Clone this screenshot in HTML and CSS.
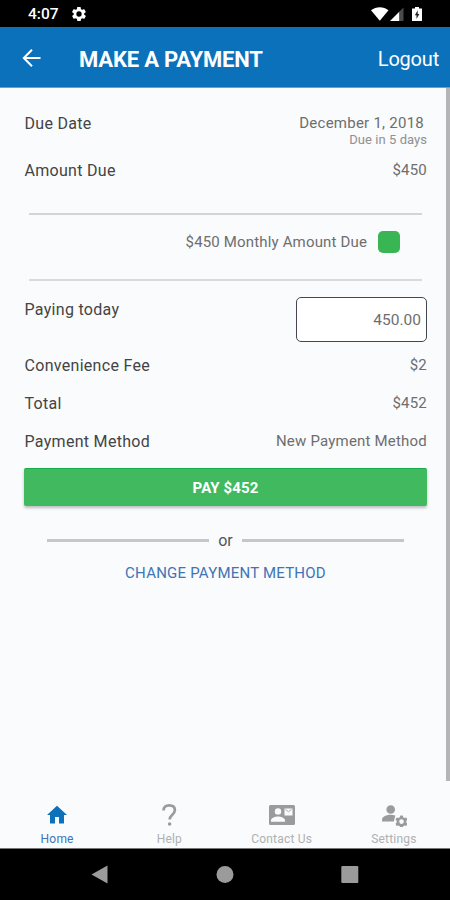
FILE: index.html
```html
<!DOCTYPE html>
<html lang="en">
<head>
<meta charset="utf-8">
<title>Make a Payment</title>
<link rel="stylesheet" href="styles.css">
</head>
<body>
<div class="status">
  <span class="clock">4:07</span>
  <svg class="gear" viewBox="2 2 20 20"><path fill="#fff" d="M19.4 13a7.500 7.500 0 0 0 0-2l2.100-1.600c.2-.2.3-.4.1-.7l-2-3.400c-.1-.2-.4-.3-.6-.2l-2.500 1a7 7 0 0 0-1.700-1l-.4-2.600a.5.5 0 0 0-.5-.5h-4c-.3 0-.5.2-.5.5l-.4 2.600a7 7 0 0 0-1.700 1l-2.500-1c-.2-.1-.5 0-.6.2l-2 3.400c-.1.3-.1.5.1.7L4.500 11a7.500 7.500 0 0 0 0 2l-2.100 1.600c-.2.2-.2.4-.1.7l2 3.400c.1.2.4.3.6.2l2.500-1a7 7 0 0 0 1.700 1l.4 2.600c0 .3.2.5.5.5h4c.3 0 .5-.2.5-.5l.4-2.600a7 7 0 0 0 1.700-1l2.500 1c.2.1.5 0 .6-.2l2-3.400c.1-.3.1-.5-.1-.7zM12 15.800a3.800 3.800 0 1 1 0-7.600 3.800 3.800 0 0 1 0 7.600z"/></svg>
  <svg class="radios" viewBox="0 0 54 16">
    <path fill="#fff" d="M1 4.300C6.300.2 13.400.2 18.500 4.300L9.800 14.800z"/>
    <path fill="#fff" d="M20 15 29.500 5.500V15z"/><path fill="#4a4a4a" d="M29.500 5.500 33.500 1.500V15h-4z"/>
    <path fill="#fff" d="M42 2.500H45V1h4v1.500h3V15H42z"/><path fill="#222" d="M47.800 4.300 44.800 9.300h1.700v3.600l2.900-5h-1.700z"/>
  </svg>
</div>
<header class="bar">
  <svg class="back" viewBox="0 0 20 20"><path d="M18.500 10H2M10 1.800 1.800 10l8.200 8.200" fill="none" stroke="#fff" stroke-width="2"/></svg>
  <h1>MAKE A PAYMENT</h1>
  <span class="logout">Logout</span>
</header>
<main>
  <div class="content">
    <div class="row due"><span class="label">Due Date</span>
      <div class="stack"><span class="value date">December 1, 2018</span><span class="sub">Due in 5 days</span></div></div>
    <div class="row amount"><span class="label">Amount Due</span><span class="value">$450</span></div>
    <div class="option"><span class="value option-text">$450 Monthly Amount Due</span><span class="check"></span></div>
    <div class="row paying"><span class="label">Paying today</span><div class="field">450.00</div></div>
    <div class="row"><span class="label">Convenience Fee</span><span class="value">$2</span></div>
    <div class="row"><span class="label">Total</span><span class="value">$452</span></div>
    <div class="row method"><span class="label">Payment Method</span><span class="value">New Payment Method</span></div>
    <div class="pay">PAY $452</div>
    <div class="or"><span class="dash"></span><span>or</span><span class="dash"></span></div>
    <div class="change">CHANGE PAYMENT METHOD</div>
  </div>
  <div class="scroll"></div>
</main>
<nav class="tabs">
  <div class="tab active"><svg viewBox="0 0 24 24"><path d="M10 20.500v-6.500h4v6.500h5V12h3L12 2.800 2 12h3v8.500z"/></svg><span>Home</span></div>
  <div class="tab help"><svg viewBox="0 0 24 24"><path d="M6.600 7.600C6.600 4 8.900 2.300 12.200 2.300c3.500 0 5.700 1.800 5.700 4.800 0 2.200-1.200 3.500-2.800 4.900-1.600 1.500-2.400 2.300-2.400 4.500" fill="none" stroke="#9b9b9b" stroke-width="2.700"/><circle cx="12.600" cy="21" r="1.800"/></svg><span>Help</span></div>
  <div class="tab contact"><svg viewBox="0 0 26 20"><path fill-rule="evenodd" d="M1.500 0h23Q26 0 26 1.500v17q0 1.500-1.500 1.500h-23Q0 20 0 18.500v-17Q0 0 1.500 0zM9 3.200a3.200 3.200 0 1 0 0 6.400 3.200 3.200 0 0 0 0-6.400zM2 16.700h14v-1.200c0-2.600-4.500-4-7-4s-7 1.400-7 4zM15.500 3.500v7h8v-7z"/><path d="M16.500 4.500 19.500 6.700 22.500 4.500" fill="none" stroke="#aaa" stroke-width="1"/></svg><span>Contact Us</span></div>
  <div class="tab settings"><svg viewBox="0 0 26 24"><circle cx="9.700" cy="6.500" r="4.300"/><path d="M1 18.500v-2c0-3 5-4.700 8.700-4.700 1.700 0 3.300.3 4.600.8L12.800 18.500z"/><path fill-rule="evenodd" d="m19.300 12.500h2.400l.5 1.700 1.400.8 1.700-.5 1.200 2.100-1.200 1.300v1.600l1.200 1.300-1.200 2.100-1.700-.5-1.400.8-.5 1.700h-2.400l-.5-1.700-1.400-.8-1.700.5-1.200-2.100 1.200-1.300v-1.600l-1.200-1.300 1.200-2.100 1.700.5 1.400-.8zM20.500 16.300a2.300 2.300 0 1 0 0 4.600 2.300 2.300 0 0 0 0-4.600z"/></svg><span>Settings</span></div>
</nav>
<div class="android">
  <svg viewBox="0 0 450 52"><g fill="#9b9b9b"><path d="M91.500 25.500 107.500 16.500v18z"/><circle cx="225" cy="25.500" r="8.500"/><rect x="341.300" y="17" width="17" height="17" rx="1"/></g></svg>
</div>
</body>
</html>
```
FILE: styles.css
```css
* { box-sizing: border-box; }
body {
  margin: 0;
  height: 900px;
  display: flex;
  flex-direction: column;
  overflow: hidden;
  background: #f9fbfd;
  font-family: Roboto, sans-serif;
  font-size: 16px;
}
svg { display: block; }
.status {
  height: 27px;
  display: flex;
  align-items: center;
  background: #000;
  color: #fff;
  padding: 1px 26px 0 28px;
}
.clock { font-size: 15.500px; font-weight: 500; width: 44px; }
.gear { width: 14px; height: 14px; }
.radios { width: 54px; height: 16px; margin-left: auto; }
.bar {
  height: 61px;
  display: flex;
  align-items: center;
  background: #0b71bb;
  border-bottom: 1px solid #6d9fcb;
  color: #fff;
  padding: 2px 11px 0 22px;
}
.back { width: 20px; height: 20px; }
h1 { margin: 2px 0 0 37px; font-size: 22px; font-weight: 700; letter-spacing: -.18px; }
.logout { margin: 2px 0 0 auto; font-size: 20px; letter-spacing: -.2px; }
main { height: 693px; display: flex; justify-content: space-between; }
.content { width: 403px; margin-left: 24px; padding-top: 16px; }
.scroll { width: 4px; background: #b5b5b7; }
.row { height: 38px; display: flex; justify-content: space-between; line-height: 38px; }
.label { color: #444; letter-spacing: .3px; padding: 1px 0 0 .500px; }
.value { color: #6e6e6e; font-size: 15px; letter-spacing: .2px; }
.due { height: 47px; }
.stack { display: flex; flex-direction: column; align-items: flex-end; }
.date { margin-right: 3px; height: 28px; letter-spacing: .25px; }
.sub { font-size: 13px; line-height: 16px; color: #909090; letter-spacing: .05px; }
.amount { height: 62px; }
.option {
  height: 68px;
  margin: 0 5px;
  border-top: 2px solid #d3d4d6;
  border-bottom: 2px solid #d9dadc;
  display: flex;
  justify-content: flex-end;
  align-items: center;
  padding: 0 22px 10px 0;
}
.option-text { letter-spacing: .16px; }
.check { width: 22px; height: 22px; margin-left: 11px; border-radius: 5px; background: #37b653; }
.paying { height: 65px; padding-top: 10px; }
.paying .label { padding-top: 0; }
.paying .field { margin-top: 6px; }
.field {
  width: 131px;
  height: 45px;
  border: 1px solid #444750;
  border-radius: 5px;
  background: #fff;
  color: #6e6e6e;
  font-size: 15.500px;
  line-height: 45px;
  padding-right: 5px;
  text-align: right;
}
.pay {
  height: 38px;
  margin-top: 8px;
  border-radius: 2px;
  background: #40b95f;
  border-top: 1px solid #16af4b;
  box-shadow: 0 2px 3px rgba(0, 0, 0, .25);
  color: #fff;
  font-size: 15px;
  font-weight: 700;
  line-height: 38px;
  text-align: center;
  letter-spacing: .1px;
}
.or { display: flex; justify-content: center; align-items: center; gap: 9px; margin-top: 24px; height: 20px; color: #555; }
.dash { width: 162px; height: 3px; background: #c6c7c9; }
.change { margin-top: 13px; line-height: 20px; text-align: center; color: #3f74b5; font-size: 15px; letter-spacing: .22px; }
.tabs {
  height: 68px;
  display: flex;
  justify-content: space-around;
  padding-left: 1px;
  border-bottom: 1px solid #777;
}
.tab { width: 112px; display: flex; flex-direction: column; align-items: center; font-size: 12px; color: #b0b0b0; letter-spacing: .2px; }
.tab svg { width: 24px; height: 24px; margin-top: 22px; fill: #9b9b9b; }
.tab span { margin-top: 5px; line-height: 14px; }
.active { color: #3f74b5; }
.active svg { fill: #0b71bb; }
.contact svg { width: 26px; height: 20px; margin: 24px 0 2px; }
.settings svg { width: 26px; }
.android { height: 51px; background: #000; }
.android svg { width: 450px; height: 52px; }
```
